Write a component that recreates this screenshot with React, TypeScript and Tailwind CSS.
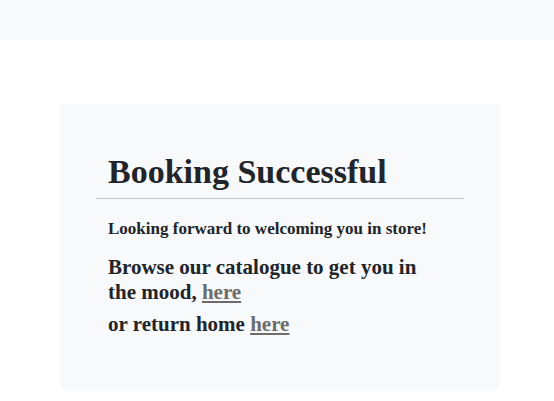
import React from "react";

export default function App() {
  const serif = { fontFamily: '"Liberation Serif", "DejaVu Serif", serif' };
  return (
    <div className="w-[554px] h-[401px] bg-white text-[#212529]" style={serif}>
      <div className="h-[40px] bg-[#f8f9fa]" />
      <div className="ml-[60px] mt-[64px] w-[440px] h-[287px] rounded-md bg-[#f8f9fa] pt-[44px] px-[36px]">
        <h1 className="pl-[12px] text-[34px] leading-[48px] font-bold">Booking Successful</h1>
        <hr className="mt-[2px] border-0 border-t border-[#c6c7c9]" />
        <div className="pl-[12px] pr-[20px]">
          <p className="mt-[18px] text-[17px] leading-[24px] font-bold">Looking forward to welcoming you in store!</p>
          <p className="mt-[14px] text-[21px] leading-[25px] font-bold w-[340px]">
            Browse our catalogue to get you in the mood,{" "}
            <a className="inline-block leading-[22px] text-[#6c6c6c] underline" href="#">here</a>
          </p>
          <p className="mt-[7px] text-[21px] leading-[25px] font-bold">
            or return home <a className="inline-block leading-[22px] text-[#6c6c6c] underline" href="#">here</a>
          </p>
        </div>
      </div>
    </div>
  );
}
